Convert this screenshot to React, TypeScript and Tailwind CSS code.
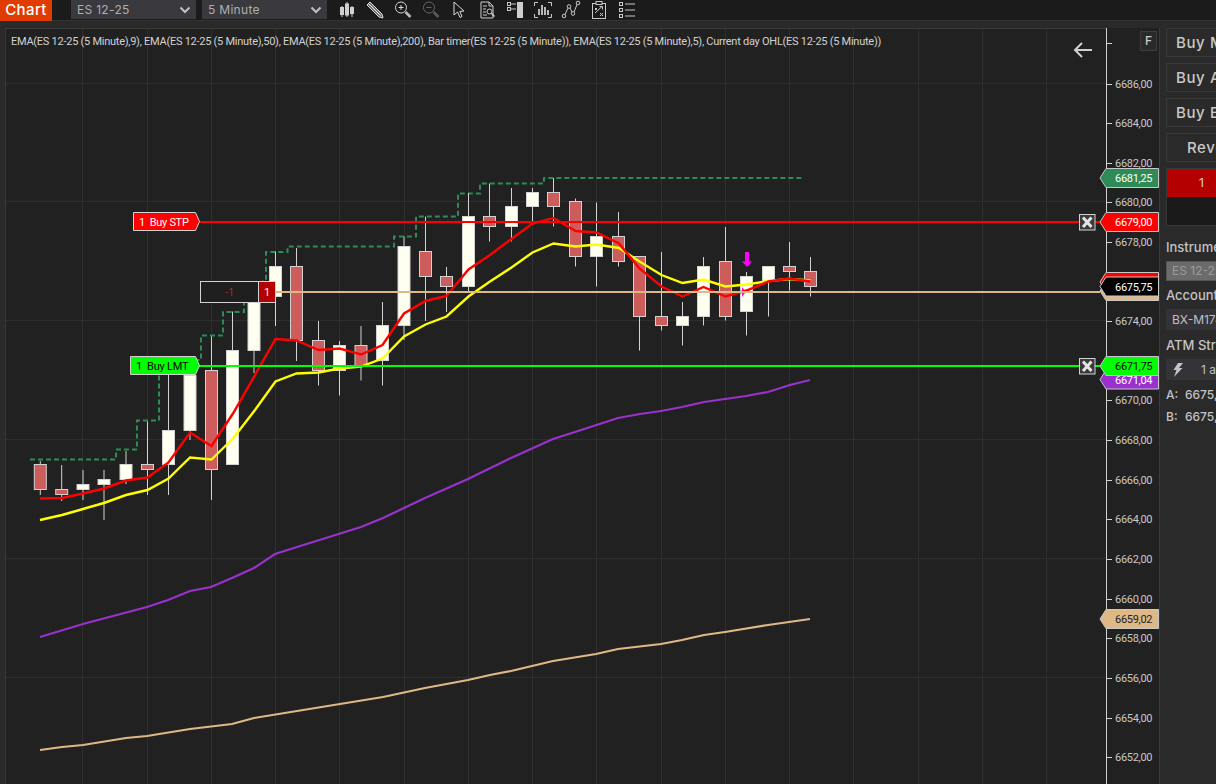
import React from "react";

const candles: [number, string, number, number, number, number][] = [
  [40.3, "r", 464.5, 489.5, 461, 495],
  [61.7, "r", 489.5, 494.5, 465, 501],
  [83, "w", 484.5, 489.5, 470, 500],
  [104, "w", 479.5, 484.5, 470, 520],
  [126, "w", 464.5, 479.5, 451, 484],
  [147.5, "r", 464.5, 469.5, 421.5, 495],
  [168.5, "w", 430.5, 464.5, 375, 495],
  [190, "w", 375.5, 430.5, 360, 440],
  [211.5, "r", 370.5, 469.5, 336.5, 500],
  [232.5, "w", 350.5, 464.5, 311.5, 464.5],
  [254, "w", 296.5, 350.5, 290, 373],
  [275.5, "w", 266.5, 296.5, 251.5, 326],
  [296.5, "r", 266.5, 340.5, 248, 361],
  [318.5, "r", 340.5, 370.5, 321, 385.5],
  [339.5, "w", 345.5, 370.5, 341, 395.5],
  [361, "r", 345.5, 365.5, 326, 380.5],
  [382.5, "w", 325.5, 360.5, 302, 385.5],
  [404, "w", 246.5, 325.5, 236.5, 340],
  [425.5, "r", 251.5, 276.5, 216.5, 321],
  [446.5, "r", 276.5, 286.5, 267, 312],
  [468.5, "w", 216.5, 286.5, 193, 291.5],
  [489.5, "r", 216.5, 226.5, 183.5, 241.5],
  [511.5, "w", 206.5, 226.5, 188, 241.5],
  [532.5, "w", 192.5, 206.5, 188, 223],
  [553.5, "r", 192.5, 206.5, 178, 226.5],
  [575.5, "r", 201.5, 256.5, 198.5, 266.5],
  [596.5, "w", 236.5, 256.5, 202.5, 286.5],
  [618.5, "r", 236.5, 261.5, 212, 266.5],
  [639.5, "r", 256.5, 316.5, 256.5, 350.5],
  [661.5, "r", 316.5, 325.5, 252, 330.5],
  [682.5, "w", 316.5, 325.5, 302, 345.5],
  [703.5, "w", 266.5, 316.5, 257, 325.5],
  [725.5, "r", 261.5, 316.5, 227, 320.5],
  [746.5, "w", 276.5, 311.5, 272, 335.5],
  [768.5, "w", 266.5, 281.5, 266.5, 316.5],
  [789.5, "r", 266.5, 271.5, 242, 290.5],
  [810.5, "r", 271.5, 286.5, 257, 296.5],
];

const redLine =
  "40,498.5 62,498 83,493.5 104,488.5 126,480.5 147.5,477.5 168.5,462.5 190,432.5 211.5,446 233,413.5 255,375 275.5,339 296.5,340.5 318.5,350 339.5,348.5 361,354.5 382.5,345 404,313.5 425.5,301 446.5,296 468.5,269.5 490,255 511.5,239 532.5,223.5 553.5,218 575.5,231 596.5,232.5 619,243.5 639.5,268.5 661.5,286.5 682.5,296.5 703.5,287 725.5,296.5 746.5,290.5 768.5,281.5 789.5,278.5 810.5,281.5";
const yellowLine =
  "40,520 62,515 83,509 104,503 126,495 147.5,490 168.5,478.5 190,457.5 211.5,459.5 233,438.5 255,410 275.5,381.5 296.5,373.5 318.5,372.5 339.5,368.5 361,366.5 382.5,358.5 404,336.5 425.5,324.5 446.5,316.5 468.5,296.5 490,281.5 511.5,267.5 532.5,252.5 553.5,243.5 575.5,246.5 596.5,244.5 619,248 639.5,261.5 661.5,275 682.5,283 703.5,279.5 725.5,286.5 746.5,284.5 768.5,281 789.5,279 810.5,280.5";
const purpleLine =
  "40,637 83,624 147,607 168,600 190,591 211,587 232,578 254,568 275,554 297,547 361,527 383,518 425,498 468,479 511,458 553,439 575,432 618,418 640,414 661,411 682,407 704,402 746,396 768,392 790,385 810,380";
const tanLine =
  "40,750 62,747 83,745 126,738 147,736 190,729 232,724 254,718 297,711 340,704 383,697 425,688 468,680 490,675 511,671 553,661 596,654 618,649 661,644 682,640 704,635 725,632 768,625 810,619";
const dashLine =
  "30,459.5 116,459.5 116,449.5 137,449.5 137,420.5 159,420.5 159,360 201,360 201,335.5 223,335.5 223,312 244,312 244,290 266,280 266,252 287.5,252 287.5,246.5 394,246.5 394,236.5 416,236.5 416,216.5 458,216.5 458,193.5 480,193.5 480,183.5 544,183.5 544,178 802,178";

const gridX = [82, 147, 211, 275, 339, 404, 468, 532, 596, 661, 725, 789, 853, 918, 982, 1046];
const gridY = [83, 201, 320, 439, 558, 677];

const axis: [string, number][] = [
  ["6686,00", 84], ["6684,00", 123], ["6682,00", 163], ["6680,00", 202], ["6678,00", 242],
  ["6674,00", 321], ["6670,00", 400], ["6668,00", 440], ["6666,00", 480], ["6664,00", 519],
  ["6662,00", 559], ["6660,00", 599], ["6658,00", 638], ["6656,00", 678], ["6654,00", 718], ["6652,00", 757],
];

function Tag({ y, h = 19, fill, text, color = "#ffffff" }: { y: number; h?: number; fill: string; text?: string; color?: string }) {
  const m = y + h / 2;
  return (
    <g>
      <polygon
        points={`1100,${m} 1106,${y} 1158.5,${y} 1158.5,${y + h} 1106,${y + h}`}
        fill={fill}
        stroke="#c8c8c8"
        strokeWidth="1"
      />
      {text && (
        <text x="1115" y={m + 4} fontSize="11" letterSpacing="-0.3" fill={color}>
          {text}
        </text>
      )}
    </g>
  );
}

function CloseBox({ y }: { y: number }) {
  return (
    <g>
      <rect x="1079.5" y={y} width="15.5" height="15.5" fill="#3a3a3a" stroke="#d3d3d3" />
      <path
        d={`M1083 ${y + 3} L1091.500 ${y + 12.500} M1091.500 ${y + 3} L1083 ${y + 12.500}`}
        stroke="#e4e4e4"
        strokeWidth="3"
      />
    </g>
  );
}

function Chart() {
  return (
    <svg
      viewBox="5 28 1155 756"
      className="block h-[756px] w-[1155px] font-['Roboto',sans-serif]"
    >
      <rect x="5" y="28" width="1101" height="756" fill="#212121" />
      {gridX.map((x) => (
        <line key={x} x1={x + 0.5} x2={x + 0.5} y1="28" y2="784" stroke="#2f2f2f" />
      ))}
      {gridY.map((y) => (
        <line key={y} x1="5" x2="1106" y1={y + 0.5} y2={y + 0.5} stroke="#2f2f2f" />
      ))}
      <rect x="5.5" y="28.5" width="1154" height="760" fill="none" stroke="#3a3a3a" />

      <polyline points={tanLine} fill="none" stroke="#deb887" strokeWidth="2.2" />
      <polyline points={purpleLine} fill="none" stroke="#9932cc" strokeWidth="2.2" />
      <polyline points={dashLine} fill="none" stroke="#2e8b57" strokeWidth="2" strokeDasharray="5 3" />

      {candles.map(([x, c, top, bottom, wt, wb], i) => (
        <g key={i}>
          <line x1={x} x2={x} y1={wt} y2={wb} stroke="#d3d3d3" />
          <rect
            x={x - 6}
            y={top}
            width="12"
            height={bottom - top}
            fill={c === "r" ? "#cd5c5c" : "#fffff0"}
            stroke="#d3d3d3"
          />
        </g>
      ))}

      <polygon points="742,287 745,291 745,293 742,297" fill="#ff00ff" />
      <polyline points={yellowLine} fill="none" stroke="#ffff00" strokeWidth="2.4" />
      <polyline points={redLine} fill="none" stroke="#ff0000" strokeWidth="2.4" />
      <polygon points="745,252 749,252 749,261.5 752,261.5 747,267 742,261.5 745,261.5" fill="#ff00ff" />

      <line x1="275" x2="1100" y1="292" y2="292" stroke="#deb887" strokeWidth="2" />
      <line x1="199" x2="1100" y1="222" y2="222" stroke="#ff0000" strokeWidth="2" />
      <line x1="199" x2="1100" y1="366" y2="366" stroke="#00ff00" strokeWidth="2" />

      <polygon points="133.5,212.5 195.5,212.5 199.5,221.5 195.5,230.5 133.5,230.5" fill="#ff0000" stroke="#d3d3d3" />
      <text x="139" y="225.5" fontSize="11" letterSpacing="-0.3" fill="#ffffff" xmlSpace="preserve">1  Buy STP</text>
      <polygon points="130.5,356.5 195.5,356.5 199.5,365.5 195.5,374.5 130.5,374.5" fill="#00ff00" stroke="#d3d3d3" />
      <text x="136" y="369.5" fontSize="11" letterSpacing="-0.2" fill="#000000" xmlSpace="preserve">1  Buy LMT</text>

      <rect x="200.5" y="281.5" width="58" height="21" fill="#1f1f1f" stroke="#d3d3d3" />
      <text x="229.5" y="296" fontSize="11" fill="#b22222" textAnchor="middle">-1</text>
      <rect x="258.5" y="281.5" width="17" height="21" fill="#b40000" stroke="#d3d3d3" />
      <text x="267" y="296" fontSize="11" fill="#e8e8e8" textAnchor="middle">1</text>

      <CloseBox y={214.5} />
      <CloseBox y={358.5} />

      <rect x="1106" y="28" width="54" height="756" fill="#212121" />
      <line x1="1106.5" x2="1106.5" y1="28" y2="784" stroke="#d3d3d3" />
      <line x1="1159.5" x2="1159.5" y1="28" y2="784" stroke="#3a3a3a" />
      <line x1="1106" x2="1112" y1="43.5" y2="43.5" stroke="#d3d3d3" />
      {axis.map(([t, y]) => (
        <g key={t}>
          <line x1="1106" x2="1112" y1={y + 0.5} y2={y + 0.5} stroke="#d3d3d3" />
          <text x="1115" y={y + 4} fontSize="11" letterSpacing="-0.3" fill="#c8c8c8">
            {t}
          </text>
        </g>
      ))}

      <Tag y={168.5} fill="#2e8b57" text="6681,25" />
      <Tag y={212.5} fill="#ff0000" text="6679,00" />
      <Tag y={272.5} fill="#ff0000" />
      <Tag y={281.5} fill="#deb887" />
      <Tag y={277} fill="#000000" text="6675,75" />
      <Tag y={370} fill="#9932cc" />
      <text x="1115" y="384" fontSize="11" letterSpacing="-0.3" fill="#ffffff">6671,04</text>
      <Tag y={356.5} fill="#00ff00" text="6671,75" color="#000000" />
      <Tag y={609.5} fill="#deb887" text="6659,02" color="#222222" />
    </svg>
  );
}

function ToolIcon({ children, w = 20 }: { children: React.ReactNode; w?: number }) {
  return (
    <div className="flex w-[28px] shrink-0 justify-center">
      <svg width={w} height="20" viewBox={`0 0 ${w} 20`} fill="none" stroke="#c9c9c9" strokeWidth="1">
        {children}
      </svg>
    </div>
  );
}

function Toolbar() {
  return (
    <div className="ml-[6px] flex h-[20px] items-center">
      <ToolIcon w={18}>
        <path d="M4 6v11M9 2v15M14 6v11" stroke="#d0d0d0" />
        <rect x="2" y="7" width="4" height="8" fill="#d0d0d0" stroke="none" />
        <rect x="7" y="3.5" width="4" height="12" fill="#d0d0d0" stroke="none" />
        <rect x="12" y="7" width="4" height="7" fill="#d0d0d0" stroke="none" />
      </ToolIcon>
      <ToolIcon>
        <path d="M2 5 L5 2 L17 14 L18 18 L14 17 Z" fill="#6f6f6f" stroke="#d8d8d8" />
        <path d="M3.500 3.500 L15.500 15.500" stroke="#f0f0f0" />
      </ToolIcon>
      <ToolIcon>
        <circle cx="8" cy="7.5" r="5.5" stroke="#d6d6d6" />
        <path d="M5.5 7.5h5M8 5v5" stroke="#d6d6d6" />
        <path d="M12.5 12 L17.5 17" stroke="#b9b9b9" strokeWidth="2.6" />
      </ToolIcon>
      <ToolIcon>
        <circle cx="8" cy="7.5" r="5.5" stroke="#666" />
        <path d="M5.5 7.5h5" stroke="#666" />
        <path d="M12.5 12 L17.5 17" stroke="#5a5a5a" strokeWidth="2.6" />
      </ToolIcon>
      <ToolIcon w={16}>
        <path d="M3 2 L3 15 L6.5 12 L9 17.5 L11 16.5 L8.8 11.5 L13 11 Z" stroke="#d8d8d8" fill="#1b1b1b" />
      </ToolIcon>
      <ToolIcon w={18}>
        <path d="M3 2h8l4 4v12H3z" stroke="#d0d0d0" />
        <path d="M11 2v4h4M5 6h4M5 9h3M5 12h3M5 15h4" stroke="#d0d0d0" />
        <circle cx="11.5" cy="11.5" r="2.5" fill="#1b1b1b" stroke="#d0d0d0" />
        <path d="M13.5 13.5 L16.5 16.5" stroke="#d0d0d0" strokeWidth="1.5" />
      </ToolIcon>
      <ToolIcon>
        <rect x="12" y="2" width="6" height="16" fill="#cfcfcf" stroke="none" />
        <rect x="2.5" y="2.5" width="3" height="3" />
        <rect x="2.5" y="7.5" width="3" height="3" />
        <path d="M6 4h5M6 9h5" />
      </ToolIcon>
      <ToolIcon>
        <path d="M1.5 6V2.5H5M15 2.5h3.5V6M1.5 14v3.500H5M15 17.500h3.500V14" stroke="#c9c9c9" />
        <path d="M6 15V9M9 15V5M12 15V7M15 15V10" stroke="#c9c9c9" strokeWidth="1.800" />
      </ToolIcon>
      <ToolIcon>
        <circle cx="3" cy="16" r="1.800" />
        <circle cx="8" cy="6.500" r="1.800" />
        <circle cx="12" cy="13.500" r="1.800" />
        <circle cx="17" cy="3" r="1.800" />
        <path d="M4 14.500 L7 8M9 8 L11 12M13 12 L16 4.500" />
      </ToolIcon>
      <ToolIcon w={18}>
        <rect x="2.500" y="3.500" width="13" height="15" />
        <rect x="6" y="1.500" width="6" height="3" fill="#1b1b1b" />
        <path d="M5 13 L12 6.500M9.500 6.500H12.500V9.500M10 13l3 3M13 13l-3 3M5 8l2 2M7 8l-2 2" />
      </ToolIcon>
      <ToolIcon>
        <rect x="2.500" y="2.500" width="3" height="3" />
        <rect x="2.500" y="8.500" width="3" height="3" />
        <rect x="2.500" y="14.500" width="3" height="3" />
        <path d="M8 4h10M8 10h10M8 16h10" />
      </ToolIcon>
    </div>
  );
}

function Select({ label, w }: { label: string; w: string }) {
  return (
    <div className={`flex h-[19px] ${w} items-center justify-between bg-[#39393e] pl-[6px] pr-[5px]`}>
      <span className="font-['Inter',sans-serif] text-[12px] leading-none tracking-[0.3px] text-[#b0b0b0]">{label}</span>
      <svg width="12" height="8" viewBox="0 0 12 8" fill="none" stroke="#c0c0c0" strokeWidth="2">
        <path d="M1.500 1.500 L6 6 L10.500 1.500" />
      </svg>
    </div>
  );
}

function ActionButton({ label, indent }: { label: string; indent: string }) {
  return (
    <div className={`flex h-[29px] w-[80px] items-center whitespace-nowrap border border-[#393939] bg-[#2a2a2a] pt-[2px] ${indent} text-[15px] font-medium tracking-[0.6px] text-[#c9c9c9]`}>
      {label}
    </div>
  );
}

function FieldLabel({ children }: { children: React.ReactNode }) {
  return <div className="whitespace-nowrap text-[13px] font-medium leading-none text-[#c4c4c4]">{children}</div>;
}

function Panel() {
  return (
    <div className="ml-[6px] flex w-[50px] shrink-0 flex-col overflow-hidden font-['Inter',sans-serif]">
      <div className="flex flex-col gap-[6px]">
        <ActionButton label="Buy Market" indent="pl-[9px]" />
        <ActionButton label="Buy Ask" indent="pl-[9px]" />
        <ActionButton label="Buy Bid" indent="pl-[9px]" />
        <ActionButton label="Reverse" indent="pl-[20px]" />
      </div>
      <div className="mt-[6px] w-[80px] border border-[#393939]">
        <div className="flex h-[28px] items-center bg-[#b40000] pl-[32px] text-[12px] text-[#e6d6d6]">1</div>
        <div className="h-[28px] bg-[#1a1a1a]"></div>
      </div>
      <div className="mt-[15px]"><FieldLabel>Instrument</FieldLabel></div>
      <div className="mt-[7px] flex h-[20px] w-[80px] items-center border border-[#555] bg-[#6b6b6b] pl-[5px] text-[12px] text-[#9c9c9c] whitespace-nowrap">ES 12-25</div>
      <div className="mt-[8px]"><FieldLabel>Account</FieldLabel></div>
      <div className="mt-[7px] flex h-[21px] w-[80px] items-center bg-[#333338] pl-[6px] text-[12px] text-[#c0c0c0] whitespace-nowrap">BX-M1742</div>
      <div className="mt-[9px]"><FieldLabel>ATM Strategy</FieldLabel></div>
      <div className="mt-[7px] flex h-[21px] w-[80px] items-center bg-[#333338] pl-[7px] text-[12px] text-[#c0c0c0] whitespace-nowrap">
        <svg width="10" height="14" viewBox="0 0 10 14" className="mr-[18px] shrink-0" fill="#c4c4c4">
          <path d="M5 0 H10 L6 5 H9.500 L1 14 L3.500 7 H0.500 Z" />
        </svg>
        1 atm
      </div>
      <div className="mt-[9px] flex whitespace-nowrap text-[12px] font-medium leading-none text-[#c4c4c4]">
        <span className="w-[19px] shrink-0">A:</span>6675,75
      </div>
      <div className="mt-[10px] flex whitespace-nowrap text-[12px] font-medium leading-none text-[#c4c4c4]">
        <span className="w-[19px] shrink-0">B:</span>6675,50
      </div>
    </div>
  );
}

export default function App() {
  return (
    <div className="flex h-[784px] w-[1216px] flex-col overflow-hidden bg-[#2a2a2a]">
      <div className="flex h-[21px] shrink-0 items-start border-b border-b-[#333333] bg-[#1b1b1b]">
        <div className="flex h-[21px] w-[52px] items-center justify-center bg-[#e03c00] font-['Inter',sans-serif] text-[15px] font-medium tracking-[0.4px] text-white">
          Chart
        </div>
        <div className="ml-[19px] flex gap-[6px]">
          <Select label="ES 12-25" w="w-[125px]" />
          <Select label="5 Minute" w="w-[125px]" />
        </div>
        <Toolbar />
      </div>
      <div className="flex min-h-0 flex-1 pl-[5px] pt-[7px]">
        <div className="relative h-[756px] w-[1155px] shrink-0">
          <Chart />
          <div className="absolute left-[6px] top-[7px] whitespace-nowrap font-['Roboto',sans-serif] text-[11px] leading-[13px] tracking-[-0.26px] text-[#d2d2d2]">
            EMA(ES 12-25 (5 Minute),9), EMA(ES 12-25 (5 Minute),50), EMA(ES 12-25 (5 Minute),200), Bar timer(ES 12-25 (5 Minute)), EMA(ES 12-25 (5 Minute),5), Current day OHL(ES 12-25 (5 Minute))
          </div>
          <svg
            width="20"
            height="18"
            viewBox="0 0 20 18"
            fill="none"
            stroke="#d0d0d0"
            strokeWidth="2"
            className="absolute left-[1068px] top-[13px]"
          >
            <path d="M19 9 H2 M9 2 L2 9 L9 16" />
          </svg>
          <div className="absolute left-[1135px] top-[3px] flex h-[20px] w-[17px] items-center justify-center border border-[#3d3d3d] bg-[#2a2a2a] font-['Inter',sans-serif] text-[12px] font-medium text-[#c9c9c9]">
            F
          </div>
        </div>
        <Panel />
      </div>
    </div>
  );
}
